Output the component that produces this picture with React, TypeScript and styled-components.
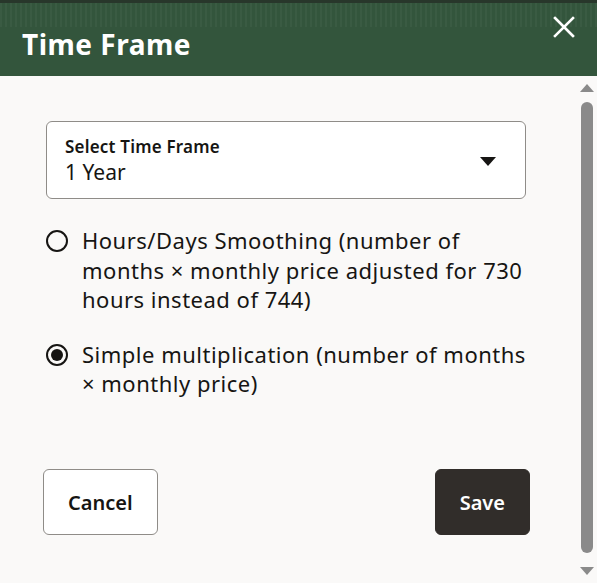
import React, { useState } from 'react';
import styled, { createGlobalStyle } from 'styled-components';

const Global = createGlobalStyle`
  html, body {
    margin: 0;
    padding: 0;
    background: #faf9f8;
    font-family: "Noto Sans", "Liberation Sans", sans-serif;
    color: #161513;
  }
  * { box-sizing: border-box; }
`;

const Dialog = styled.div`
  width: 597px;
  height: 583px;
  display: flex;
  flex-direction: column;
  background: #faf9f8;
  overflow: hidden;
`;

const Header = styled.header`
  height: 76px;
  flex: none;
  display: flex;
  align-items: center;
  justify-content: space-between;
  padding: 8px 20px 0 22px;
  border-top: 3px solid #28372b;
  background:
    repeating-linear-gradient(90deg, rgba(255,255,255,0.035) 0 2px, transparent 2px 5px) top / 100% 24px no-repeat,
    #33553c;
`;

const Title = styled.h1`
  margin: 0;
  font-size: 28px;
  font-weight: 700;
  color: #ffffff;
  letter-spacing: 0.5px;
`;

const CloseButton = styled.button`
  width: 26px;
  height: 26px;
  padding: 0;
  border: none;
  background: none;
  margin-top: -34px;
  display: flex;
  align-items: center;
  justify-content: center;
  cursor: pointer;
`;

const Main = styled.div`
  flex: 1;
  display: flex;
  min-height: 0;
`;

const Content = styled.div`
  flex: 1;
  display: flex;
  flex-direction: column;
  padding: 45px 51px 48px 46px;
`;

const SelectBox = styled.div`
  height: 78px;
  border: 1px solid #8f8c88;
  border-radius: 6px;
  background: #ffffff;
  display: flex;
  align-items: center;
  justify-content: space-between;
  padding: 2px 29px 0 18px;
`;

const SelectText = styled.div`
  display: flex;
  flex-direction: column;
`;

const SelectLabel = styled.span`
  font-size: 17px;
  font-weight: 600;
  line-height: 22px;
  letter-spacing: 0.2px;
`;

const SelectValue = styled.span`
  font-size: 21px;
  line-height: 28px;
`;

const Options = styled.div`
  display: flex;
  flex-direction: column;
  gap: 25px;
  margin-top: 27px;
`;

const Option = styled.label`
  display: flex;
  align-items: flex-start;
  gap: 14px;
  font-size: 22px;
  letter-spacing: 0.5px;
  line-height: 29.5px;
  cursor: pointer;
`;

const RadioCircle = styled.span<{ $checked: boolean }>`
  flex: none;
  width: 22px;
  height: 22px;
  margin-top: 4px;
  border-radius: 50%;
  border: 2px solid #161513;
  display: flex;
  align-items: center;
  justify-content: center;
  &::after {
    content: '';
    width: 12px;
    height: 12px;
    border-radius: 50%;
    background: #161513;
    display: ${p => (p.$checked ? 'block' : 'none')};
  }
`;

const Footer = styled.div`
  margin-top: auto;
  display: flex;
  justify-content: space-between;
  margin-left: -3px;
  margin-right: -4px;
`;

const Button = styled.button<{ $primary?: boolean }>`
  height: 66px;
  padding: 0 24px;
  border-radius: 6px;
  font-family: "Noto Sans", "Liberation Sans", sans-serif;
  font-size: 20px;
  font-weight: 600;
  cursor: pointer;
  border: 1px solid ${p => (p.$primary ? '#312d2a' : '#8f8c88')};
  background: ${p => (p.$primary ? '#312d2a' : '#ffffff')};
  color: ${p => (p.$primary ? '#ffffff' : '#161513')};
`;

const Scrollbar = styled.div`
  width: 20px;
  flex: none;
  display: flex;
  flex-direction: column;
  align-items: center;
  padding: 8px 0 8px;
  background: #faf9f8;
`;

const Thumb = styled.div`
  flex: 1;
  width: 12px;
  margin: 10px 0 14px;
  border-radius: 6px;
  background: #8a8a8a;
`;

const Arrow = styled.svg`
  flex: none;
  display: block;
`;

const options = [
  'Hours/Days Smoothing (number of months × monthly price adjusted for 730 hours instead of 744)',
  'Simple multiplication (number of months × monthly price)',
];

export default function App() {
  const [selected, setSelected] = useState(1);
  return (
    <>
      <Global />
      <Dialog>
        <Header>
          <Title>Time Frame</Title>
          <CloseButton aria-label="Close">
            <svg width="22" height="22" viewBox="0 0 22 22">
              <path d="M2 2L20 20M20 2L2 20" stroke="#fff" strokeWidth="2.6" strokeLinecap="square" />
            </svg>
          </CloseButton>
        </Header>
        <Main>
          <Content>
            <SelectBox>
              <SelectText>
                <SelectLabel>Select Time Frame</SelectLabel>
                <SelectValue>1 Year</SelectValue>
              </SelectText>
              <svg width="16" height="9" viewBox="0 0 16 9">
                <path d="M0 0H16L8 9Z" fill="#161513" />
              </svg>
            </SelectBox>
            <Options>
              {options.map((text, i) => (
                <Option key={i} onClick={() => setSelected(i)}>
                  <RadioCircle $checked={selected === i} />
                  <span>{text}</span>
                </Option>
              ))}
            </Options>
            <Footer>
              <Button>Cancel</Button>
              <Button $primary>Save</Button>
            </Footer>
          </Content>
          <Scrollbar>
            <Arrow width="14" height="8" viewBox="0 0 14 8">
              <path d="M0 8L7 0L14 8Z" fill="#8a8a8a" />
            </Arrow>
            <Thumb />
            <Arrow width="14" height="8" viewBox="0 0 14 8">
              <path d="M0 0L7 8L14 0Z" fill="#8a8a8a" />
            </Arrow>
          </Scrollbar>
        </Main>
      </Dialog>
    </>
  );
}
